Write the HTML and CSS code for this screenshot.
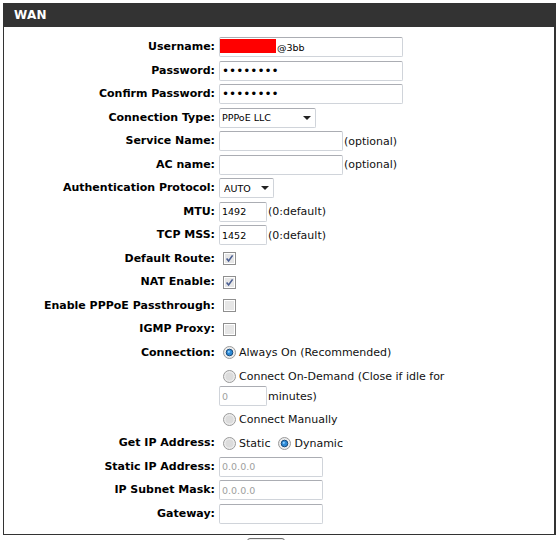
FILE: index.html
```html
<!DOCTYPE html>
<html lang="en">
<head>
  <meta charset="UTF-8">
  <title>WAN</title>
  <link rel="stylesheet" href="styles.css">
</head>
<body>
  <div class="wan">
    <div class="wan-head">WAN</div>
    <div class="wan-body">
      <div class="row">
        <label class="lbl">Username:</label>
        <div class="field">
          <span class="redact-wrap">
            <input type="text" class="txt w184 user" value="@3bb">
            <span class="redact"></span>
          </span>
        </div>
      </div>
      <div class="row">
        <label class="lbl">Password:</label>
        <div class="field"><input type="password" class="txt w184 pw" value="abcdefgh"></div>
      </div>
      <div class="row">
        <label class="lbl">Confirm Password:</label>
        <div class="field"><input type="password" class="txt w184 pw" value="abcdefgh"></div>
      </div>
      <div class="row">
        <label class="lbl">Connection Type:</label>
        <div class="field">
          <span class="sel-wrap">
            <select class="sel w97"><option>PPPoE LLC</option></select>
            <span class="caret"></span>
          </span>
        </div>
      </div>
      <div class="row">
        <label class="lbl">Service Name:</label>
        <div class="field"><input type="text" class="txt w124"><span class="note">(optional)</span></div>
      </div>
      <div class="row">
        <label class="lbl">AC name:</label>
        <div class="field"><input type="text" class="txt w124"><span class="note">(optional)</span></div>
      </div>
      <div class="row">
        <label class="lbl">Authentication Protocol:</label>
        <div class="field">
          <span class="sel-wrap">
            <select class="sel w55"><option>AUTO</option></select>
            <span class="caret"></span>
          </span>
        </div>
      </div>
      <div class="row">
        <label class="lbl">MTU:</label>
        <div class="field"><input type="text" class="txt w48" value="1492"><span class="note">(0:default)</span></div>
      </div>
      <div class="row">
        <label class="lbl">TCP MSS:</label>
        <div class="field"><input type="text" class="txt w48" value="1452"><span class="note">(0:default)</span></div>
      </div>
      <div class="row">
        <label class="lbl">Default Route:</label>
        <div class="field">
          <svg class="cb" width="13" height="13" viewBox="0 0 13 13"><rect x="0.5" y="0.5" width="12" height="12" fill="#fff" stroke="#8f8f8f"/><rect x="2" y="2" width="9" height="9" fill="#e6e6e6"/><path d="M3.6 6.4 L5.6 9 L9.6 3.4" fill="none" stroke="#4a5e92" stroke-width="1.6"/></svg>
        </div>
      </div>
      <div class="row">
        <label class="lbl">NAT Enable:</label>
        <div class="field">
          <svg class="cb" width="13" height="13" viewBox="0 0 13 13"><rect x="0.5" y="0.5" width="12" height="12" fill="#fff" stroke="#8f8f8f"/><rect x="2" y="2" width="9" height="9" fill="#e6e6e6"/><path d="M3.6 6.4 L5.6 9 L9.6 3.4" fill="none" stroke="#4a5e92" stroke-width="1.6"/></svg>
        </div>
      </div>
      <div class="row">
        <label class="lbl">Enable PPPoE Passthrough:</label>
        <div class="field">
          <svg class="cb" width="13" height="13" viewBox="0 0 13 13"><rect x="0.5" y="0.5" width="12" height="12" fill="#fff" stroke="#8f8f8f"/><rect x="2" y="2" width="9" height="9" fill="#e6e6e6"/></svg>
        </div>
      </div>
      <div class="row">
        <label class="lbl">IGMP Proxy:</label>
        <div class="field">
          <svg class="cb" width="13" height="13" viewBox="0 0 13 13"><rect x="0.5" y="0.5" width="12" height="12" fill="#fff" stroke="#8f8f8f"/><rect x="2" y="2" width="9" height="9" fill="#e6e6e6"/></svg>
        </div>
      </div>
      <div class="row">
        <label class="lbl">Connection:</label>
        <div class="field stack">
          <div class="opt">
            <svg class="rd" width="13" height="13" viewBox="0 0 13 13"><circle cx="6.5" cy="6.5" r="6" fill="#ececec" stroke="#9a9a9a"/><circle cx="6.5" cy="6.5" r="3.3" fill="#2d8ad6" stroke="#17497a"/><circle cx="5.8" cy="5.8" r="1.1" fill="#8fd0ff"/></svg>
            Always On (Recommended)
          </div>
          <div class="opt tight">
            <svg class="rd" width="13" height="13" viewBox="0 0 13 13"><circle cx="6.5" cy="6.5" r="6" fill="#ececec" stroke="#9a9a9a"/><circle cx="6.5" cy="6.5" r="4" fill="#dcdcdc"/></svg>
            Connect On-Demand (Close if idle for
          </div>
          <div class="opt">
            <input type="text" class="txt w48 dim" value="0" disabled><span class="unit">minutes)</span>
          </div>
          <div class="opt">
            <svg class="rd" width="13" height="13" viewBox="0 0 13 13"><circle cx="6.5" cy="6.5" r="6" fill="#ececec" stroke="#9a9a9a"/><circle cx="6.5" cy="6.5" r="4" fill="#dcdcdc"/></svg>
            Connect Manually
          </div>
        </div>
      </div>
      <div class="row">
        <label class="lbl">Get IP Address:</label>
        <div class="field">
          <svg class="rd" width="13" height="13" viewBox="0 0 13 13"><circle cx="6.5" cy="6.5" r="6" fill="#ececec" stroke="#9a9a9a"/><circle cx="6.5" cy="6.5" r="4" fill="#dcdcdc"/></svg>
          <span>Static</span>
          <svg class="rd next" width="13" height="13" viewBox="0 0 13 13"><circle cx="6.5" cy="6.5" r="6" fill="#ececec" stroke="#9a9a9a"/><circle cx="6.5" cy="6.5" r="3.3" fill="#2d8ad6" stroke="#17497a"/><circle cx="5.8" cy="5.8" r="1.1" fill="#8fd0ff"/></svg>
          <span>Dynamic</span>
        </div>
      </div>
      <div class="row">
        <label class="lbl">Static IP Address:</label>
        <div class="field"><input type="text" class="txt w104 dim" value="0.0.0.0" disabled></div>
      </div>
      <div class="row">
        <label class="lbl">IP Subnet Mask:</label>
        <div class="field"><input type="text" class="txt w104 dim" value="0.0.0.0" disabled></div>
      </div>
      <div class="row">
        <label class="lbl">Gateway:</label>
        <div class="field"><input type="text" class="txt w104"></div>
      </div>
    </div>
  </div>
  <div class="actions"><button class="btn" aria-label="Apply"></button></div>
</body>
</html>
```

FILE: styles.css
```css
html {
  overflow: hidden;
}
body {
  margin: 0;
  padding: 3px 0 0 3px;
  font-family: "DejaVu Sans", Verdana, sans-serif;
  font-size: 11px;
  color: #111;
  background: #fff;
}
.wan {
  width: 553px;
}
.wan-head {
  height: 24px;
  line-height: 24px;
  padding-left: 11px;
  background: #333;
  color: #fff;
  font-weight: bold;
  font-size: 12px;
  letter-spacing: 0.3px;
}
.wan-body {
  border: 1px solid #333;
  border-top: none;
  border-right-width: 2px;
  padding: 10px 0 10px;
}
.row {
  display: flex;
  align-items: flex-start;
  margin-bottom: 3.5px;
}
.row:last-child {
  margin-bottom: 0;
}
.lbl {
  flex: none;
  width: 211px;
  line-height: 20px;
  text-align: right;
  font-weight: bold;
  color: #000;
}
.field {
  display: flex;
  align-items: center;
  min-height: 20px;
  margin-left: 4px;
}
.stack {
  flex-direction: column;
  align-items: flex-start;
}
.opt {
  display: flex;
  align-items: center;
  height: 20px;
  margin-bottom: 3.5px;
}
.opt.tight,
.opt:last-child {
  margin-bottom: 0;
}
.txt {
  box-sizing: border-box;
  height: 20px;
  margin: 0;
  padding: 0 2px;
  border: 1px solid #d0d4da;
  border-top-color: #abadb3;
  border-radius: 2px;
  background: #fff;
  font-family: "DejaVu Sans", Verdana, sans-serif;
  font-size: 9.5px;
  color: #000;
  outline: none;
}
.w184 { width: 184px; }
.w124 { width: 124px; }
.w104 { width: 104px; }
.w48 { width: 48px; }
.pw {
  font-size: 12px;
}
.dim {
  color: #a0a0a0;
  -webkit-text-fill-color: #a0a0a0;
}
.redact-wrap,
.sel-wrap {
  position: relative;
  display: inline-flex;
}
.user {
  text-indent: 55px;
}
.redact {
  position: absolute;
  left: 1px;
  top: 2px;
  width: 56px;
  height: 14px;
  background: #ff0000;
}
.sel {
  box-sizing: border-box;
  height: 20px;
  margin: 0;
  padding: 0 0 0 2px;
  border: 1px solid #d0d4da;
  border-top-color: #abadb3;
  border-radius: 2px;
  background: #fff;
  font-family: "DejaVu Sans", Verdana, sans-serif;
  font-size: 9.5px;
  color: #000;
  -webkit-appearance: none;
  appearance: none;
}
.w97 { width: 97px; }
.w55 { width: 55px; padding-left: 4px; }
.caret {
  position: absolute;
  right: 5px;
  top: 8px;
  width: 0;
  height: 0;
  border-left: 4px solid transparent;
  border-right: 4px solid transparent;
  border-top: 4px solid #222;
}
.note {
  margin-left: 1px;
}
.unit {
  margin-left: 1px;
}
.cb,
.rd {
  flex: none;
  margin: 0 3px 0 4px;
}
.rd.next {
  margin-left: 8px;
}
.actions {
  padding: 3px 0 0 244px;
}
.btn {
  display: block;
  width: 38px;
  height: 22px;
  padding: 0;
  border: 1px solid #707070;
  border-radius: 3px;
  background: #ececec;
}
```
